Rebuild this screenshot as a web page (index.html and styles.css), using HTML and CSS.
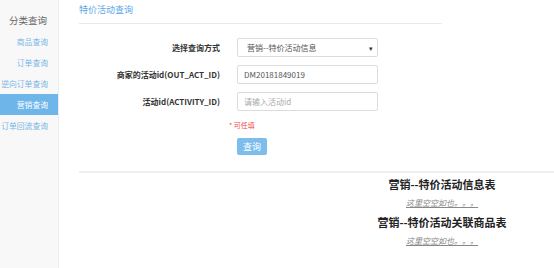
FILE: index.html
```html
<!DOCTYPE html>
<html lang="zh-CN">
<head>
    <meta charset="UTF-8">
    <title>特价活动查询</title>
    <link rel="stylesheet" href="styles.css">
</head>
<body>
    <div class="sidebar">
        <div class="side-title">分类查询</div>
        <a class="side-item">商品查询</a>
        <a class="side-item">订单查询</a>
        <a class="side-item">逆向订单查询</a>
        <a class="side-item active">营销查询</a>
        <a class="side-item">订单回流查询</a>
    </div>

    <div class="main">
        <div class="page-title">特价活动查询</div>

        <div class="query-form">
            <label class="form-label">选择查询方式</label>
            <div class="select-box">
                <span>营销--特价活动信息</span>
                <span class="caret">▾</span>
            </div>

            <label class="form-label">商家的活动id(OUT_ACT_ID)</label>
            <input class="text-input" type="text" value="DM20181849019">

            <label class="form-label">活动id(ACTIVITY_ID)</label>
            <input class="text-input" type="text" placeholder="请输入活动id">

            <div class="form-note">* 可任填</div>
            <div class="form-action">
                <button class="query-btn">查询</button>
            </div>
        </div>

        <div class="results">
            <h3 class="result-title">营销--特价活动信息表</h3>
            <p class="empty-tip">这里空空如也。。。</p>
            <h3 class="result-title">营销--特价活动关联商品表</h3>
            <p class="empty-tip">这里空空如也。。。</p>
        </div>
    </div>
</body>
</html>
```

FILE: styles.css
```css
body {
    margin: 0;
    display: flex;
    height: 268px;
    overflow: hidden;
    font-family: "Noto Sans CJK SC", "Noto Sans", sans-serif;
    background: #fff;
    color: #333;
}

.sidebar {
    width: 58px;
    flex-shrink: 0;
    background: #f8f8f8;
    border-right: 1px solid #eeeeee;
    display: flex;
    flex-direction: column;
    padding-top: 10px;
}

.side-title {
    text-align: right;
    padding-right: 11px;
    font-size: 9.5px;
    line-height: 20px;
    color: #666;
    margin-bottom: 1px;
}

.side-item {
    display: block;
    text-align: right;
    padding-right: 10px;
    font-size: 7.8px;
    line-height: 21px;
    color: #7ab7e6;
    white-space: nowrap;
    direction: rtl;
}

.side-item.active {
    background: #6eb5ea;
    color: #fff;
}

.main {
    flex: 1;
    padding-left: 20px;
}

.page-title {
    width: 363px;
    font-size: 9px;
    line-height: 14px;
    padding-top: 3px;
    padding-bottom: 6px;
    color: #5ba8e5;
    border-bottom: 1px solid #eaeaea;
}

.query-form {
    display: grid;
    grid-template-columns: 141px 141px;
    column-gap: 17px;
    row-gap: 8px;
    align-items: center;
    padding-top: 14px;
}

.form-label {
    text-align: right;
    font-size: 8px;
    font-weight: bold;
    color: #333;
    white-space: nowrap;
}

.select-box,
.text-input {
    box-sizing: border-box;
    height: 19px;
    border: 1px solid #dcdcdc;
    border-radius: 2px;
    font-family: inherit;
    font-size: 8px;
    color: #555;
    background: #fff;
    outline: none;
    margin: 0;
}

.select-box {
    display: flex;
    justify-content: space-between;
    align-items: center;
    padding: 0 4px 0 9px;
}

.caret {
    font-size: 7px;
    color: #333;
}

.text-input {
    padding: 0 6px;
}

.text-input::placeholder {
    color: #aaa;
}

.form-note {
    grid-column: 2;
    margin-left: -8px;
    margin-top: 1px;
    font-size: 7px;
    color: #f04848;
}

.form-action {
    grid-column: 2;
    margin-top: 0;
}

.query-btn {
    display: block;
    width: 30px;
    height: 17px;
    padding: 0;
    border: none;
    border-radius: 2px;
    background: #7dbdec;
    color: #fff;
    font-family: inherit;
    font-size: 9px;
}

.results {
    margin-top: 16px;
    border-top: 2px solid #f0f0f0;
    padding-left: 251px;
    text-align: center;
}

.result-title {
    margin: 0;
    font-size: 11px;
    line-height: 16px;
    color: #222;
}

.result-title:first-child {
    margin-top: 3px;
}

.empty-tip {
    margin: 1px 0 1px;
    font-size: 8px;
    line-height: 20px;
    color: #888;
    font-style: italic;
    text-decoration: underline;
}
```
